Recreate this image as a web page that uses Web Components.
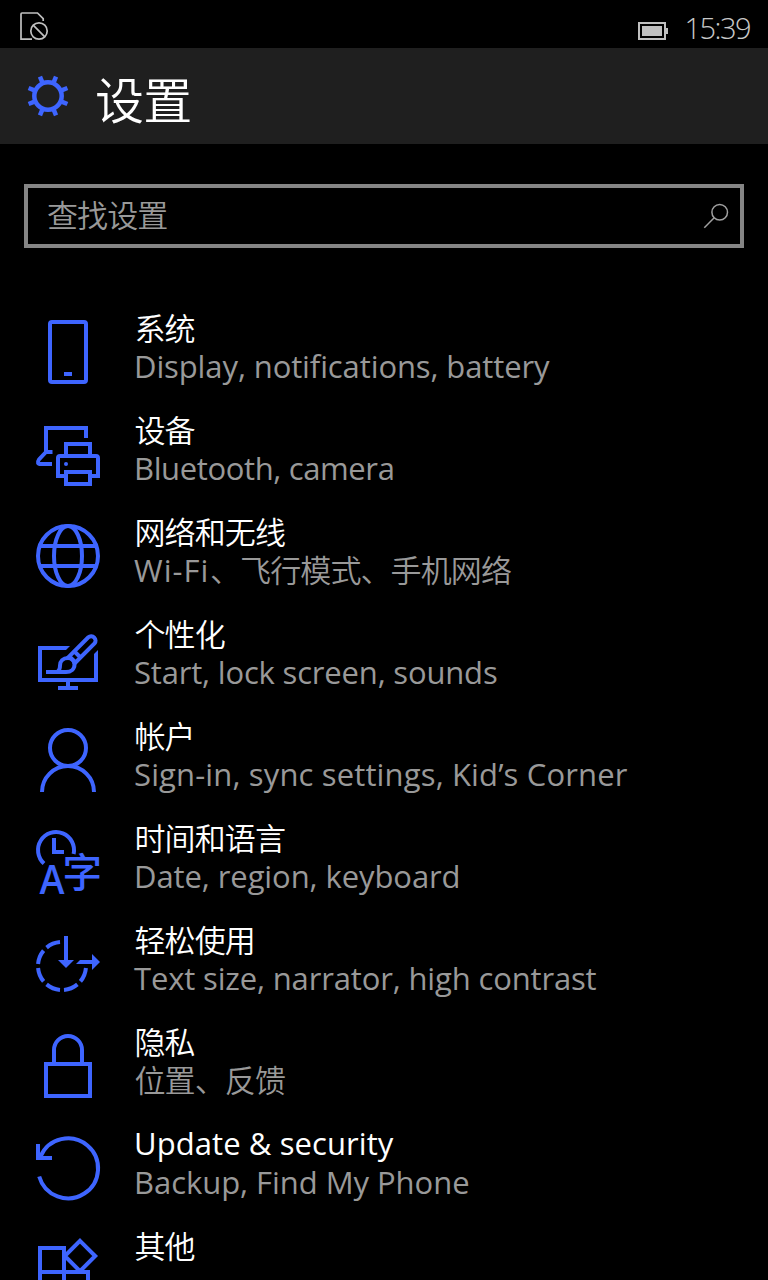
<!DOCTYPE html>
<html lang="zh-CN">
<head>
<meta charset="utf-8">
<title>设置</title>
<style>
    html, body {
        margin: 0;
        height: 1280px;
        overflow: hidden;
        background: #000000;
    }
    body {
        --accent: #3e65ff;
        --subtle: #999999;
        font-family: "Open Sans", "Noto Sans CJK SC", sans-serif;
        color: #ffffff;
    }
</style>
</head>
<body>

<settings-page>
    <status-bar slot="status">15:39</status-bar>
    <page-header slot="header">设置</page-header>
    <search-box slot="search">查找设置</search-box>
    <settings-item icon="system">
        <fit-text slot="title">系统</fit-text>
        <fit-text slot="detail" latin width="415">Display, notifications, battery</fit-text>
    </settings-item>
    <settings-item icon="devices">
        <fit-text slot="title">设备</fit-text>
        <fit-text slot="detail" latin width="260">Bluetooth, camera</fit-text>
    </settings-item>
    <settings-item icon="network">
        <fit-text slot="title">网络和无线</fit-text>
        <span slot="detail"><fit-text latin width="75">Wi-Fi</fit-text><fit-text>、飞行模式、手机网络</fit-text></span>
    </settings-item>
    <settings-item icon="personal">
        <fit-text slot="title">个性化</fit-text>
        <fit-text slot="detail" latin width="363">Start, lock screen, sounds</fit-text>
    </settings-item>
    <settings-item icon="accounts">
        <fit-text slot="title">帐户</fit-text>
        <fit-text slot="detail" latin width="493">Sign-in, sync settings, Kid’s Corner</fit-text>
    </settings-item>
    <settings-item icon="language">
        <fit-text slot="title">时间和语言</fit-text>
        <fit-text slot="detail" latin width="326">Date, region, keyboard</fit-text>
    </settings-item>
    <settings-item icon="access">
        <fit-text slot="title">轻松使用</fit-text>
        <fit-text slot="detail" latin width="462">Text size, narrator, high contrast</fit-text>
    </settings-item>
    <settings-item icon="privacy">
        <fit-text slot="title">隐私</fit-text>
        <fit-text slot="detail">位置、反馈</fit-text>
    </settings-item>
    <settings-item icon="update">
        <fit-text slot="title" latin width="259">Update &amp; security</fit-text>
        <fit-text slot="detail" latin width="335">Backup, Find My Phone</fit-text>
    </settings-item>
    <settings-item icon="extras">
        <fit-text slot="title">其他</fit-text>
    </settings-item>
</settings-page>

<script>
    const icons = {
        system: `
            <rect x="14" y="2" width="36" height="60" rx="2"/>
            <path d="M28 54H36"/>`,
        devices: `
            <path d="M50 16V6H10V30H16.5M10 30L3 37.5Q0 42 5 42H16"/>
            <path d="M30 34V22H54V34M28 54H22V36q0-2 2-2H60q2 0 2 2V54H56"/>
            <rect x="30" y="50" width="24" height="12"/>
            <circle class="fill" cx="30" cy="42" r="2"/>`,
        network: `
            <circle cx="32" cy="32" r="30"/>
            <ellipse cx="32" cy="32" rx="14" ry="30"/>
            <path d="M3 22H61M3 42H61"/>`,
        personal: `
            <path class="fill" d="M2 20H34L30 24H6V52H58V28L62 24V56H34V60H42V64H22V60H30V56H2Z"/>
            <path d="M10 46H30c5 0 8.500-3 8.500-7.500a6.500 6.500 0 0 0-6.500-6.500c-5 0-8 3.500-8 7.500q0 5-3 6.500"/>
            <path d="M31 32.600L52.300 11.300a4.400 4.400 0 0 1 6.200 6.200L37.500 38.500M38.500 25.500L44.500 31.500M33.500 30.500L39.500 36.500"/>`,
        accounts: `
            <circle cx="32" cy="20" r="18"/>
            <path d="M6 64a26 26 0 0 1 52 0"/>`,
        language: `
            <path d="M37.600 24A18 18 0 1 0 8 33.500M18 8V22H28"/>
            <text x="3.500" y="64" font-size="39" textLength="25" lengthAdjust="spacingAndGlyphs">A</text>
            <text x="26.500" y="56.500" font-size="39.500" class="cjk">字</text>`,
        access: `
            <path d="M50 34A24 24 0 1 1 26 10" pathLength="270" stroke-dasharray="35 10" stroke-dashoffset="-5"/>
            <path class="fill" d="M28 4H32V28H38L30 36L22 28H28ZM44 28H56V22L64 30L56 38V32H40Z"/>`,
        privacy: `
            <rect x="10" y="30" width="44" height="32"/>
            <path d="M18 30V16a14 14 0 0 1 28 0V30"/>`,
        update: `
            <path d="M3.200 40.500A30 30 0 1 0 4.500 20.500M2 8V22H16"/>`,
        extras: `
            <path d="M4 66V10H28V66M4 34H52V66"/>
            <path d="M44 2.800L59.200 18L44 33.200L28.800 18Z"/>`
    };

    // Single line of text, tracked so that it fills the given width
    class FitText extends HTMLElement {

        constructor() {
            super();

            const shadowRoot = this.attachShadow({mode: 'open'});

            shadowRoot.innerHTML = `
                <style>
                    :host {
                        display: inline-block;
                        white-space: pre;
                        padding-left: 0.5px;
                        font-size: 31px;
                        font-weight: 350;
                        line-height: 40px;
                        letter-spacing: -0.9px;
                        font-family: "Liberation Sans", "Noto Sans CJK SC", sans-serif;
                    }
                    :host([latin]) {
                        padding-left: 0;
                        font-family: "Open Sans", sans-serif;
                        font-weight: 400;
                        line-height: 36px;
                        letter-spacing: 0;
                    }
                    :host([latin][slot="title"]) {
                        line-height: 34px;
                    }
                </style>
                <slot></slot>
            `.trim().replace(/<\/style>\s+/, '</style>');
        }

        connectedCallback() {
            const width = Number(this.getAttribute('width'));

            if(width) {
                const count = this.textContent.length;
                const natural = this.getBoundingClientRect().width;
                this.style.letterSpacing = `${(width + 0.5 - natural) / count}px`;
            }
        }
    }

    class StatusBar extends HTMLElement {

        constructor() {
            super();

            const shadowRoot = this.attachShadow({mode: 'open'});

            shadowRoot.innerHTML = `
                <style>
                    :host {
                        display: flex;
                        align-items: center;
                        height: 48px;
                        padding: 0 18px;
                        box-sizing: border-box;
                        color: #c8c8c8;
                    }
                    svg {
                        display: block;
                        fill: none;
                        stroke: #c0c0c0;
                    }
                    .battery {
                        margin: 14px 14px 0 auto;
                    }
                    .time {
                        font-size: 29px;
                        font-weight: 330;
                        line-height: 40px;
                        letter-spacing: -1.5px;
                        margin: 8px 0 0 0;
                    }
                </style>
                <svg width="32" height="32" viewBox="18 10 32 32" stroke-width="1.700" style="margin-top: 4px">
                    <path d="M32 39.200H21V14q0-1 1-1H37.500L43.200 18.700V21"/>
                    <circle cx="39" cy="31" r="8.200"/>
                    <path d="M33.200 25.200L44.800 36.800"/>
                </svg>
                <svg class="battery" width="32" height="20" viewBox="638 21 32 20" stroke-width="2">
                    <rect x="639" y="23" width="26" height="16"/>
                    <path d="M642 26H662V36H642ZM666 28H668V34H666Z" fill="#c0c0c0" stroke="none"/>
                </svg>
                <span class="time"><slot></slot></span>
            `;
        }
    }

    class PageHeader extends HTMLElement {

        constructor() {
            super();

            const shadowRoot = this.attachShadow({mode: 'open'});
            let teeth = '';

            for(let i = 0; i < 8; i++) {
                teeth += `<path d="M0 -14V-21" transform="rotate(${22.5 + i * 45})"/>`;
            }

            shadowRoot.innerHTML = `
                <style>
                    :host {
                        display: flex;
                        align-items: center;
                        gap: 23px;
                        height: 96px;
                        padding-left: 24px;
                        background: #1f1f1f;
                        font: 350 49px/72px "Liberation Sans", "Noto Sans CJK SC", sans-serif;
                        letter-spacing: -0.8px;
                    }
                    svg {
                        fill: none;
                        stroke: var(--accent);
                        stroke-width: 4.5;
                    }
                    span {
                        margin-top: 12px;
                    }
                </style>
                <svg width="48" height="48" viewBox="-24 -24 48 48">
                    <circle r="13.700"/>
                    ${teeth}
                </svg>
                <span><slot></slot></span>
            `;
        }
    }

    class SearchBox extends HTMLElement {

        constructor() {
            super();

            const shadowRoot = this.attachShadow({mode: 'open'});

            shadowRoot.innerHTML = `
                <style>
                    :host {
                        display: flex;
                        align-items: center;
                        justify-content: space-between;
                        height: 64px;
                        margin: 40px 24px 0;
                        padding: 0 10px 0 19px;
                        box-sizing: border-box;
                        border: 4px solid #858585;
                        color: var(--subtle);
                        font: 350 31px/44px "Liberation Sans", "Noto Sans CJK SC", sans-serif;
                        letter-spacing: -0.9px;
                    }
                    span {
                        padding-top: 2px;
                    }
                    svg {
                        fill: none;
                        stroke: #a0a0a0;
                        stroke-width: 1.500;
                    }
                </style>
                <span><slot></slot></span>
                <svg width="28" height="28" viewBox="0 0 28 28">
                    <circle cx="17.700" cy="10.300" r="7.800"/>
                    <path d="M12.200 15.800L2.300 25.700"/>
                </svg>
            `;
        }
    }

    class SettingsItem extends HTMLElement {

        constructor() {
            super();

            const shadowRoot = this.attachShadow({mode: 'open'});

            shadowRoot.innerHTML = `
                <style>
                    :host {
                        display: grid;
                        grid-template-columns: 64px 1fr;
                        column-gap: 34px;
                        height: 102px;
                    }
                    svg {
                        display: block;
                        margin-top: 10px;
                        overflow: visible;
                        fill: none;
                        stroke: var(--accent);
                        stroke-width: 4;
                    }
                    .fill, text {
                        fill: var(--accent);
                        stroke: none;
                    }
                    text {
                        font-family: "Open Sans", sans-serif;
                        font-weight: 600;
                    }
                    .cjk {
                        font-family: "Liberation Sans", "Noto Sans CJK SC", sans-serif;
                        font-weight: 500;
                    }
                    .title, .detail {
                        display: flex;
                        height: 38px;
                        white-space: nowrap;
                    }
                    .detail {
                        color: var(--subtle);
                    }
                    ::slotted(span) {
                        display: flex;
                    }
                </style>
                <svg width="64" height="64" viewBox="0 0 64 64">${icons[this.getAttribute('icon')]}</svg>
                <div>
                    <div class="title"><slot name="title"></slot></div>
                    <div class="detail"><slot name="detail"></slot></div>
                </div>
            `;
        }
    }

    class SettingsPage extends HTMLElement {

        constructor() {
            super();

            const shadowRoot = this.attachShadow({mode: 'open'});

            shadowRoot.innerHTML = `
                <style>
                    :host {
                        display: block;
                        width: 768px;
                        height: 1280px;
                        overflow: hidden;
                    }
                    main {
                        padding: 62px 24px 0 36px;
                    }
                </style>
                <slot name="status"></slot>
                <slot name="header"></slot>
                <slot name="search"></slot>
                <main><slot></slot></main>
            `;
        }
    }

    customElements.define('settings-page', SettingsPage);
    customElements.define('status-bar', StatusBar);
    customElements.define('page-header', PageHeader);
    customElements.define('search-box', SearchBox);
    customElements.define('settings-item', SettingsItem);
    customElements.define('fit-text', FitText);
</script>
</body>
</html>
